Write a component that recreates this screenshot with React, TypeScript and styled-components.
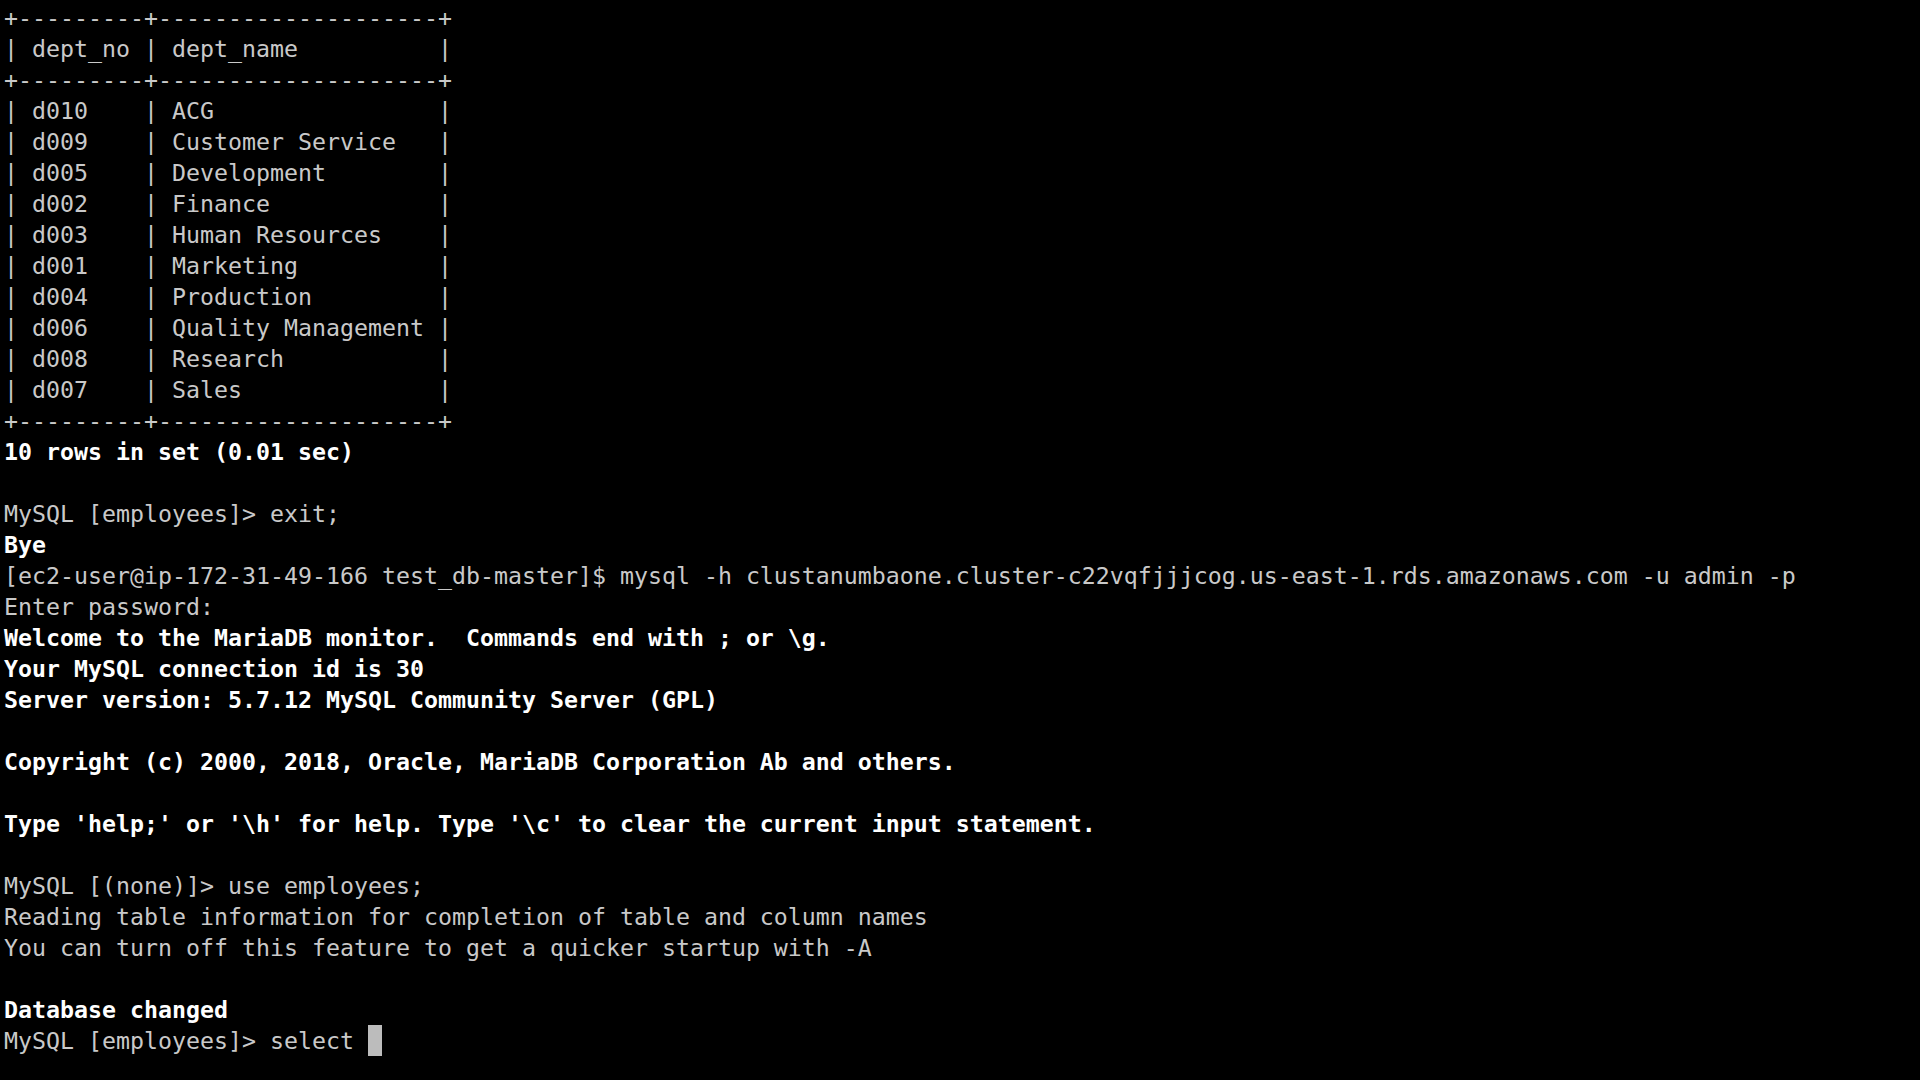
import React from "react";
import styled, { createGlobalStyle } from "styled-components";

const Global = createGlobalStyle`
  html, body { margin: 0; padding: 0; background: #000; }
  body { width: 1920px; height: 1080px; overflow: hidden; }
`;

const Screen = styled.div`
  width: 1920px;
  height: 1080px;
  background: #000;
  box-sizing: border-box;
  padding: 2px 0 0 4px;
  font-family: "DejaVu Sans Mono", "Liberation Mono", monospace;
  font-size: 23.25px;
  line-height: 31px;
`;

const Line = styled.div<{ $bright?: boolean }>`
  height: 31px;
  white-space: pre;
  color: ${(p) => (p.$bright ? "#ffffff" : "#c9c9c9")};
  font-weight: ${(p) => (p.$bright ? 700 : 400)};
`;

const Cursor = styled.span`
  display: inline-block;
  width: 14px;
  height: 31px;
  background: #bcbcbc;
  vertical-align: top;
`;

type L = { t: string; b?: boolean };

const lines: L[] = [
  { t: "+---------+--------------------+" },
  { t: "| dept_no | dept_name          |" },
  { t: "+---------+--------------------+" },
  { t: "| d010    | ACG                |" },
  { t: "| d009    | Customer Service   |" },
  { t: "| d005    | Development        |" },
  { t: "| d002    | Finance            |" },
  { t: "| d003    | Human Resources    |" },
  { t: "| d001    | Marketing          |" },
  { t: "| d004    | Production         |" },
  { t: "| d006    | Quality Management |" },
  { t: "| d008    | Research           |" },
  { t: "| d007    | Sales              |" },
  { t: "+---------+--------------------+" },
  { t: "10 rows in set (0.01 sec)", b: true },
  { t: "" },
  { t: "MySQL [employees]> exit;" },
  { t: "Bye", b: true },
  {
    t: "[ec2-user@ip-172-31-49-166 test_db-master]$ mysql -h clustanumbaone.cluster-c22vqfjjjcog.us-east-1.rds.amazonaws.com -u admin -p",
  },
  { t: "Enter password:" },
  { t: "Welcome to the MariaDB monitor.  Commands end with ; or \\g.", b: true },
  { t: "Your MySQL connection id is 30", b: true },
  { t: "Server version: 5.7.12 MySQL Community Server (GPL)", b: true },
  { t: "" },
  { t: "Copyright (c) 2000, 2018, Oracle, MariaDB Corporation Ab and others.", b: true },
  { t: "" },
  { t: "Type 'help;' or '\\h' for help. Type '\\c' to clear the current input statement.", b: true },
  { t: "" },
  { t: "MySQL [(none)]> use employees;" },
  { t: "Reading table information for completion of table and column names" },
  { t: "You can turn off this feature to get a quicker startup with -A" },
  { t: "" },
  { t: "Database changed", b: true },
];

export default function App() {
  return (
    <>
      <Global />
      <Screen>
        {lines.map((l, i) => (
          <Line key={i} $bright={l.b}>
            {l.t}
          </Line>
        ))}
        <Line>
          {"MySQL [employees]> select "}
          <Cursor />
        </Line>
      </Screen>
    </>
  );
}
